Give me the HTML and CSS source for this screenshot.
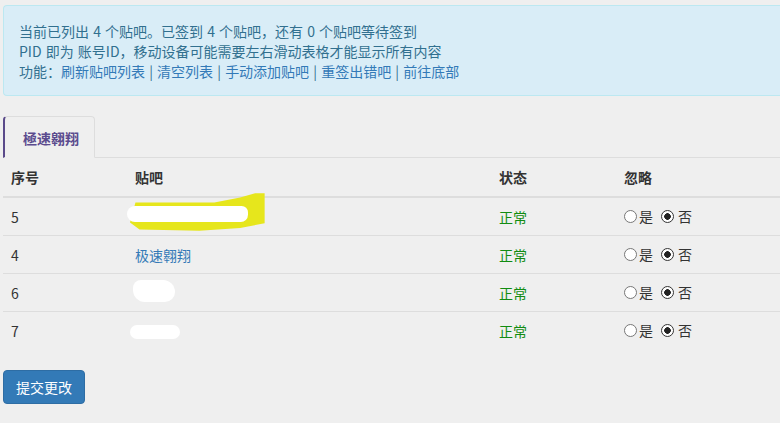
FILE: index.html
```html
<!DOCTYPE html>
<html lang="zh">
<head>
<meta charset="utf-8">
<link rel="stylesheet" href="styles.css">
</head>
<body>
<div class="page">
  <div class="alert">
    <div>当前已列出 4 个贴吧。已签到 4 个贴吧，还有 0 个贴吧等待签到</div>
    <div>PID 即为 账号ID，移动设备可能需要左右滑动表格才能显示所有内容</div>
    <div>功能：<a href="#">刷新贴吧列表</a> | <a href="#">清空列表</a> | <a href="#">手动添加贴吧</a> | <a href="#">重签出错吧</a> | <a href="#">前往底部</a></div>
  </div>

  <ul class="tabs">
    <li class="tab active">極速翱翔</li>
  </ul>

  <table class="list">
    <thead>
      <tr><th class="c-id">序号</th><th class="c-name">贴吧</th><th class="c-status">状态</th><th class="c-ignore">忽略</th></tr>
    </thead>
    <tbody>
      <tr>
        <td>5</td>
        <td class="redacted"><span class="mark-yellow"></span><span class="mark-white w1"></span></td>
        <td class="ok">正常</td>
        <td class="radios"><label><input type="radio" name="r1">是</label><label><input type="radio" name="r1" checked>否</label></td>
      </tr>
      <tr>
        <td>4</td>
        <td><a href="#">极速翱翔</a></td>
        <td class="ok">正常</td>
        <td class="radios"><label><input type="radio" name="r2">是</label><label><input type="radio" name="r2" checked>否</label></td>
      </tr>
      <tr>
        <td>6</td>
        <td class="redacted"><span class="mark-white w3"></span></td>
        <td class="ok">正常</td>
        <td class="radios"><label><input type="radio" name="r3">是</label><label><input type="radio" name="r3" checked>否</label></td>
      </tr>
      <tr>
        <td>7</td>
        <td class="redacted"><span class="mark-white w4"></span></td>
        <td class="ok">正常</td>
        <td class="radios"><label><input type="radio" name="r4">是</label><label><input type="radio" name="r4" checked>否</label></td>
      </tr>
    </tbody>
  </table>

  <button class="btn" type="button">提交更改</button>
</div>
</body>
</html>
```

FILE: styles.css
```css
html, body {
  margin: 0;
  padding: 0;
  background: #efefef;
}
body {
  font-family: "Noto Sans CJK SC", "Liberation Sans", sans-serif;
  font-size: 14px;
  line-height: 20px;
  color: #333;
  overflow: hidden;
}
.page {
  padding: 5px 0 0 3px;
}
.alert {
  background: #d9edf7;
  border: 1px solid #bce8f1;
  border-right: none;
  border-radius: 4px 0 0 4px;
  color: #31708f;
  padding: 15px 15px 14px 15px;
  word-spacing: 1px;
}
.alert a {
  color: #337ab7;
  text-decoration: none;
}
.tabs {
  list-style: none;
  margin: 20px 0 0 0;
  padding: 0;
  display: flex;
  border-bottom: 1px solid #dddddd;
}
.tab {
  box-sizing: border-box;
  width: 92px;
  height: 42px;
  margin-bottom: -1px;
  padding: 11px 0 0 18px;
  border: 1px solid #dddddd;
  border-left: 2px solid #5a4a8a;
  border-bottom-color: #efefef;
  border-radius: 4px 4px 0 0;
  background: #efefef;
  color: #5b4b8e;
  font-weight: bold;
  font-size: 14px;
}
.list {
  border-collapse: collapse;
  width: 777px;
}
.list th, .list td {
  text-align: left;
  padding: 0 8px;
  height: 37px;
  vertical-align: middle;
}
.list th {
  height: 38px;
  font-weight: bold;
  border-bottom: 2px solid #dddddd;
}
.list tbody tr + tr td {
  border-top: 1px solid #dddddd;
}
.c-id { width: 108px; }
.c-name { width: 348px; }
.c-status { width: 109px; }
.list a {
  color: #337ab7;
  text-decoration: none;
}
.ok {
  color: #118c11;
}
.radios label {
  display: inline-flex;
  align-items: center;
}
.radios input {
  appearance: none;
  -webkit-appearance: none;
  box-sizing: border-box;
  margin: 0 2px 0 0;
  width: 13px;
  height: 13px;
  border: 1px solid #777;
  border-radius: 50%;
  background: #fff;
}
.radios input:checked {
  border-color: #333;
  background: radial-gradient(circle, #222 0 3px, #fff 3.6px);
}
.radios label + label input {
  margin-left: 8px;
  margin-right: 4px;
}
.redacted {
  position: relative;
}
.mark-yellow {
  position: absolute;
  left: 3px;
  top: -6px;
  width: 136px;
  height: 40px;
  background: #e6e61c;
  clip-path: polygon(4% 26%, 62% 26%, 81% 14%, 92% 3%, 99% 3%, 99% 78%, 81% 90%, 51% 97%, 7% 94%, 0% 76%);
}
.mark-white {
  position: absolute;
  background: #ffffff;
  border-radius: 10px;
}
.w1 { left: 0; top: 8px; width: 121px; height: 16px; border-radius: 10px 8px 9px 10px; }
.w3 { left: 6px; top: 6px; width: 42px; height: 22px; border-radius: 8px 12px 10px 12px; }
.w4 { left: 3px; top: 13px; width: 50px; height: 14px; }
.btn {
  margin-top: 21px;
  background: #337ab7;
  border: 1px solid #2e6da4;
  border-radius: 4px;
  color: #ffffff;
  font-family: "Noto Sans CJK SC", "Liberation Sans", sans-serif;
  font-size: 14px;
  line-height: 20px;
  padding: 6px 12px;
  width: 82px;
}
```
